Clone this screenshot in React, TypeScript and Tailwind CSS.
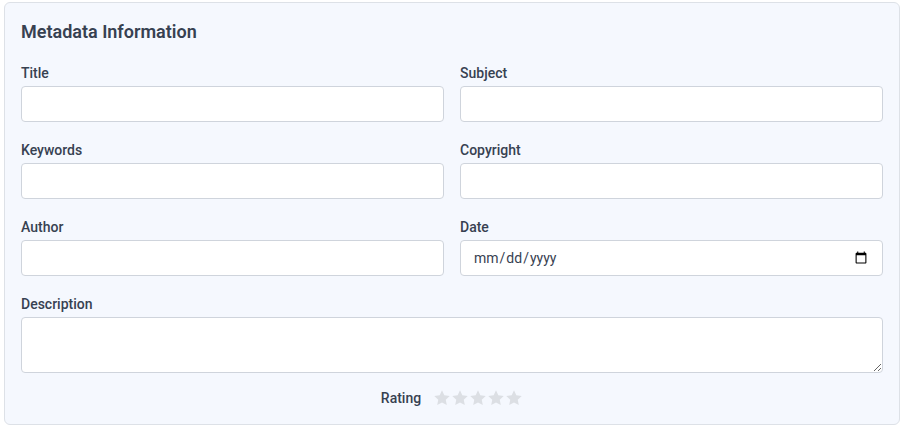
import React from 'react';

type FieldProps = {
  label: string;
  type?: string;
};

const inputClass =
  'h-9 w-full rounded-[4px] border border-[#cfd4dc] bg-white px-3 text-sm text-[#374151] focus:outline-none';

const labelClass = 'mb-[3px] text-sm font-medium leading-5 text-[#374151]';

const Field = ({ label, type = 'text' }: FieldProps) => (
  <div className="flex flex-col">
    <label className={labelClass}>{label}</label>
    <input type={type} className={inputClass} />
  </div>
);

const Star = () => (
  <svg width="18" height="18" viewBox="0 0 24 24" className="fill-[#dcdfe4]">
    <path d="M12 1.8l3.1 6.6 7.2.9-5.3 5 1.4 7.1L12 17.9l-6.4 3.5 1.4-7.1-5.3-5 7.2-.9z" />
  </svg>
);

export default function App() {
  return (
    <div className="min-h-screen bg-white font-['Roboto','Liberation_Sans',sans-serif]">
      <div className="ml-[4px] mt-[2px] w-[896px] rounded-md border border-[#dde1e7] bg-[#f5f8fe] px-4 pb-4 pt-[17px]">
        <h2 className="mb-[19px] text-lg font-semibold leading-6 text-[#374151]">
          Metadata Information
        </h2>

        <div className="grid grid-cols-2 gap-x-4 gap-y-[18px]">
          <Field label="Title" />
          <Field label="Subject" />
          <Field label="Keywords" />
          <Field label="Copyright" />
          <Field label="Author" />
          <Field label="Date" type="date" />
          <div className="col-span-2 flex flex-col">
            <label className={labelClass}>Description</label>
            <textarea className="h-[56px] w-full resize-y rounded-[4px] border border-[#cfd4dc] bg-white px-3 py-2 text-sm text-[#374151] focus:outline-none" />
          </div>
        </div>

        <div className="mt-[15px] flex items-center justify-center gap-3">
          <span className="text-sm font-medium leading-5 text-[#374151]">Rating</span>
          <div className="flex items-center">
            {[0, 1, 2, 3, 4].map((i) => (
              <Star key={i} />
            ))}
          </div>
        </div>
      </div>
    </div>
  );
}
